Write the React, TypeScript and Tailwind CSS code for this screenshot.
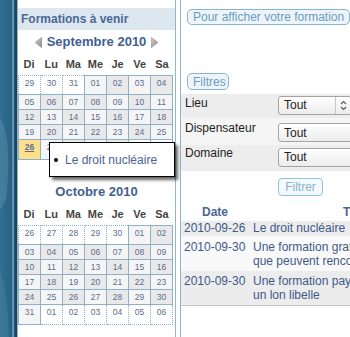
import React from 'react';

type Cell = { d: number; other?: boolean; today?: boolean };

const pad = (n: number) => n.toString().padStart(2, '0');

function weeks(lead: number[], days: number, trail: number[], today?: number): Cell[][] {
  const cells: Cell[] = [
    ...lead.map((d) => ({ d, other: true })),
    ...Array.from({ length: days }, (_, i) => ({ d: i + 1, today: i + 1 === today })),
    ...trail.map((d) => ({ d, other: true })),
  ];
  const rows: Cell[][] = [];
  for (let i = 0; i < cells.length; i += 7) rows.push(cells.slice(i, i + 7));
  return rows;
}

const septembre = weeks([29, 30, 31], 30, [1, 2], 26);
const octobre = weeks([26, 27, 28, 29, 30], 31, [1, 2, 3, 4, 5, 6]);
const jours = ['Di', 'Lu', 'Ma', 'Me', 'Je', 'Ve', 'Sa'];

function Arrow({ dir }: { dir: 'left' | 'right' }) {
  const pts = dir === 'left' ? '7,0 0,5.5 7,11' : '0,0 7,5.5 0,11';
  return (
    <svg width="7" height="11" viewBox="0 0 7 11" className="shrink-0">
      <defs>
        <linearGradient id={`g-${dir}`} x1="0" y1="0" x2="1" y2="1">
          <stop offset="0" stopColor="#d0d0d0" />
          <stop offset="1" stopColor="#8a8a8a" />
        </linearGradient>
      </defs>
      <polygon points={pts} fill={`url(#g-${dir})`} stroke="#9a9a9a" strokeWidth="0.6" />
    </svg>
  );
}

function Mois({ titre, rows, fleches }: { titre: string; rows: Cell[][]; fleches?: boolean }) {
  return (
    <div>
      <div className="h-[24px] flex items-center justify-center gap-[5px] text-[13px] font-bold text-[#42608f]">
        {fleches && <Arrow dir="left" />}
        <span>{titre}</span>
        {fleches && <Arrow dir="right" />}
      </div>
      <div className="grid grid-cols-7 w-[155px] h-[20px] items-center text-[11px] font-bold text-[#444]">
        {jours.map((j) => (
          <span key={j} className="text-center">{j}</span>
        ))}
      </div>
      <table className="mt-[1px] border-collapse table-fixed w-[155px]">
        <tbody>
          {rows.map((row, r) => (
            <tr key={r} className={r === 0 ? 'h-[19px]' : r === rows.length - 1 ? 'h-[20px]' : 'h-[15px]'}>
              {row.map((c, i) => {
                const bg = c.other
                  ? 'bg-white'
                  : c.today
                  ? 'bg-[#fde08b]'
                  : c.d % 2 === 0
                  ? 'bg-[#e9e9e9]'
                  : 'bg-[#f5f5f5]';
                return (
                  <td
                    key={i}
                    className={`p-0 pt-[2px] align-top text-center border border-[#8fb1c6] ${
                      c.other ? 'border-dotted' : 'border-solid'
                    } ${bg} text-[8.5px] leading-[10px] text-[#5a6d92] ${c.today ? 'font-bold underline' : ''}`}
                  >
                    {pad(c.d)}
                  </td>
                );
              })}
            </tr>
          ))}
        </tbody>
      </table>
    </div>
  );
}

function Select({ w, fleche }: { w: string; fleche?: boolean }) {
  return (
    <div
      className={`${w} h-[19px] flex items-center border border-[#a4a4a4] rounded-[3px] bg-gradient-to-b from-white to-[#ececec] text-[12px] text-[#222] pl-[5px]`}
    >
      <span className="flex-1">Tout</span>
      {fleche && (
        <span className="h-full flex items-center border-l border-[#c4c4c4] px-[4px]">
          <svg width="7" height="11" viewBox="0 0 7 11" fill="none" stroke="#555" strokeWidth="1.1">
            <polyline points="1,4 3.5,1.5 6,4" />
            <polyline points="1,7 3.5,9.5 6,7" />
          </svg>
        </span>
      )}
    </div>
  );
}

export default function App() {
  return (
    <div className="relative w-[350px] h-[337px] overflow-hidden bg-white flex font-['Liberation_Sans',Arial,sans-serif]">
      {/* bande décorative à gauche */}
      <div className="relative w-[17px] shrink-0 flex bg-gradient-to-b from-[#2d6789] via-[#2f6a8c] to-[#2a6285]">
        <div className="w-[12px] bg-gradient-to-r from-[#336f92] to-[#28607f]" />
        <div className="w-[1.5px] bg-[#5b93b2]" />
        <div className="w-[1.5px] bg-[#2a5b7b]" />
        <div className="flex-1 bg-[#1c425c]" />
        <svg className="absolute left-0 top-0" width="12" height="337" viewBox="0 0 12 337">
          <path d="M0 118 C8 130 11 160 6 200 L0 210 Z" fill="#5a90af" opacity="0.45" />
          <path d="M0 270 C6 290 9 315 9 337 L0 337 Z" fill="#4d86a6" opacity="0.4" />
        </svg>
      </div>

      {/* panneau Formations à venir */}
      <div className="w-[159px] shrink-0 border-x border-[#93b4c9] pt-[8px]">
        <div className="h-[22px] flex items-center pl-[3px] bg-[#dce7f0] text-[12px] font-bold text-[#4c6895]">
          Formations à venir
        </div>
        <Mois titre="Septembre 2010" rows={septembre} fleches />
        <div className="mt-[20px]">
          <Mois titre="Octobre 2010" rows={octobre} />
        </div>
      </div>

      <div className="w-[4px] shrink-0" />

      {/* partie droite */}
      <div className="flex-1 min-w-0 border-l border-[#8ab5cf]">
        <div className="pt-[9px] pl-[6px]">
          <div className="w-[163px] h-[16px] flex items-center pl-[5px] rounded-[5px] border border-[#84b6d2] bg-[#eef5fa] text-[12px] text-[#6a9cc0] whitespace-nowrap">
            Pour afficher votre formation
          </div>
        </div>
        <div className="mt-[48px] pl-[6px]">
          <div className="w-[42px] h-[17px] flex items-center pl-[5px] rounded-[5px] border border-[#84b6d2] bg-[#eef5fa] text-[12px] text-[#6a9cc0]">
            Filtres
          </div>
        </div>

        <div className="mt-[4px] w-[200px] text-[12px] text-[#222]">
          <div className="h-[24px] flex items-start bg-[#ededed]">
            <span className="w-[97px] pl-[4px] pt-[2px] leading-[14px]">Lieu</span>
            <div className="mt-[1.5px]">
              <Select w="w-[74px]" fleche />
            </div>
          </div>
          <div className="h-[27px] flex items-start bg-[#f5f5f5]">
            <span className="w-[97px] pl-[4px] pt-[3px] leading-[14px]">Dispensateur</span>
            <div className="mt-[5px]">
              <Select w="w-[90px]" />
            </div>
          </div>
          <div className="h-[26px] flex items-start bg-[#ededed]">
            <span className="w-[97px] pl-[4px] pt-[1px] leading-[14px]">Domaine</span>
            <div className="mt-[2.5px]">
              <Select w="w-[90px]" />
            </div>
          </div>
        </div>

        <div className="mt-[7px] ml-[97px] w-[45px] h-[18px] flex items-center justify-center rounded-[4px] border border-[#92c3dc] bg-[#f3f9fc] text-[12px] text-[#8ab2c8]">
          Filtrer
        </div>

        <table className="mt-[8px] w-[282px] border-collapse text-[12px] leading-[14.4px] text-[#3d5989]">
          <thead>
            <tr className="h-[17px]">
              <th className="w-[68px] p-0 font-bold text-[#4a6694] text-center">Date</th>
              <th className="p-0 font-bold text-[#4a6694] text-center">Titre</th>
            </tr>
          </thead>
          <tbody>
            <tr className="h-[15px] bg-[#ececec]">
              <td className="p-0 pl-[3px] align-middle whitespace-nowrap">2010-09-26</td>
              <td className="p-0 pl-[4px] align-middle whitespace-nowrap">Le droit nucléaire</td>
            </tr>
            <tr className="h-[35px] bg-[#f9f9f9]">
              <td className="p-0 pl-[3px] pt-[4px] align-top whitespace-nowrap">2010-09-30</td>
              <td className="p-0 pl-[4px] pt-[4px] align-top whitespace-nowrap">
                Une formation gratuite sur les risques
                <br />
                que peuvent rencontrer les agents
              </td>
            </tr>
            <tr className="h-[34px] bg-[#ececec] border-b border-[#c4c4c4]">
              <td className="p-0 pl-[3px] pt-[2.5px] align-top whitespace-nowrap">2010-09-30</td>
              <td className="p-0 pl-[4px] pt-[2.5px] align-top whitespace-nowrap">
                Une formation payante avec
                <br />
                un lon libelle
              </td>
            </tr>
          </tbody>
        </table>
      </div>

      {/* info-bulle du 26 septembre */}
      <div className="absolute left-[49px] top-[142px] w-[126px] h-[35px] flex items-center bg-white border border-black shadow-[3px_3px_3px_rgba(0,0,0,0.6)]">
        <span className="ml-[4px] w-[4px] h-[4px] rounded-full bg-black" />
        <span className="ml-[7px] text-[12px] text-[#4a6494]">Le droit nucléaire</span>
      </div>
    </div>
  );
}
